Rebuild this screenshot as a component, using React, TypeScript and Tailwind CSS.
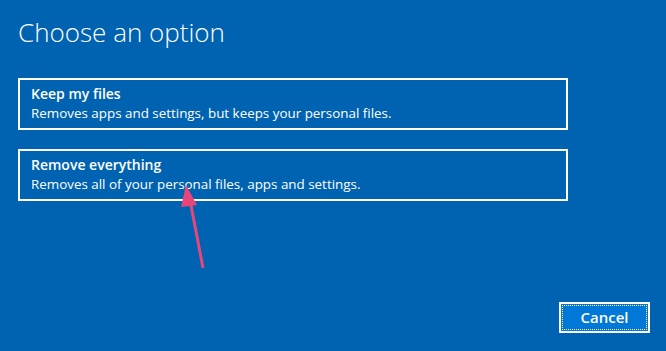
import React from "react";

type Option = {
  title: string;
  description: string;
};

const options: Option[] = [
  {
    title: "Keep my files",
    description: "Removes apps and settings, but keeps your personal files.",
  },
  {
    title: "Remove everything",
    description: "Removes all of your personal files, apps and settings.",
  },
];

const OptionBox = ({ option }: { option: Option }) => (
  <button className="flex h-[52px] w-[550px] flex-col items-start border-2 border-white px-[11px] pt-[5px] text-left text-white">
    <span className="text-[14px] font-semibold leading-[18px]">
      {option.title}
    </span>
    <span className="text-[13.4px] leading-[20px]">{option.description}</span>
  </button>
);

export default function App() {
  return (
    <div
      className="relative flex h-[351px] w-[666px] flex-col bg-[#0063b1] pl-[18px] text-white"
      style={{ fontFamily: '"Open Sans", "Noto Sans", sans-serif' }}
    >
      <h1 className="mt-[14px] text-[26px] font-light leading-[36px]">
        Choose an option
      </h1>

      <div className="mt-[28px] flex flex-col gap-[19px]">
        {options.map((o) => (
          <OptionBox key={o.title} option={o} />
        ))}
      </div>

      <div className="mt-auto mb-[18px] mr-[16px] flex justify-end">
        <button className="h-[31px] w-[91px] border-2 border-white bg-[#0078d7] p-px">
          <span className="flex h-full w-full items-center justify-center border border-dotted border-white text-[15px] font-semibold">
            Cancel
          </span>
        </button>
      </div>

      {/* pink annotation arrow */}
      <svg
        className="pointer-events-none absolute left-0 top-0"
        width="666"
        height="351"
      >
        <line
          x1="203"
          y1="268"
          x2="190"
          y2="200"
          stroke="#e8457a"
          strokeWidth="3"
        />
        <polygon points="186,185 181,207 197,205" fill="#e8457a" />
      </svg>
    </div>
  );
}
